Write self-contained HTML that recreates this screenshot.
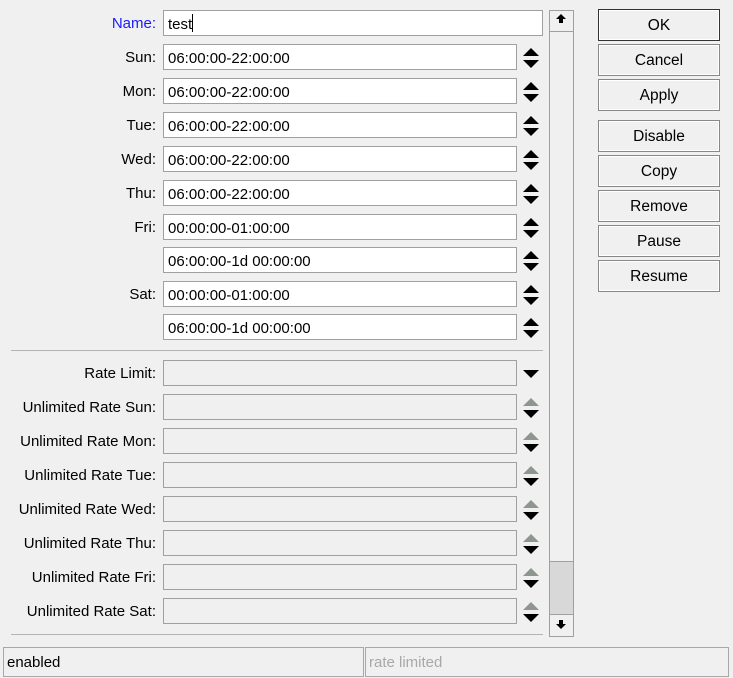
<!DOCTYPE html>
<html><head><style>
body{margin:0;width:733px;height:676px;background:#f0f0f0;font-family:"Liberation Sans",sans-serif;font-size:15px;color:#000;position:relative;overflow:hidden}
.a{position:absolute}
.lbl{position:absolute;right:577px;text-align:right;white-space:nowrap;line-height:28px}
.f{position:absolute;left:163px;width:348px;height:24px;border:1px solid #a0a0a0;background:#fff;line-height:27px;padding-left:4px;box-sizing:content-box}
.f.d{background:#f0f0f0}
.btn{position:absolute;left:598px;width:122px;border:1px solid #888;box-shadow:inset 1px 1px 0 #fff,inset -1px -1px 0 #fff;text-align:center;line-height:32px;font-size:15.5px;box-sizing:border-box;height:32px}
.up{position:absolute;left:523px;width:0;height:0;border-left:8px solid transparent;border-right:8px solid transparent;border-bottom:8px solid #000}
.dn{position:absolute;left:523px;width:0;height:0;border-left:8px solid transparent;border-right:8px solid transparent;border-top:8px solid #000}
.g{border-bottom-color:#8f968f}
</style></head><body>
<div class="lbl" style="top:10px;color:#1a1aff">Name:</div>
<div class="f" style="top:10px;width:374px">test<span style="display:inline-block;width:1px;height:18px;background:#000;vertical-align:-3px"></span></div>

<div class="lbl" style="top:44px">Sun:</div><div class="f" style="top:44px">06:00:00-22:00:00</div><div class="up" style="top:48px"></div><div class="dn" style="top:60px"></div>
<div class="lbl" style="top:78px">Mon:</div><div class="f" style="top:78px">06:00:00-22:00:00</div><div class="up" style="top:82px"></div><div class="dn" style="top:94px"></div>
<div class="lbl" style="top:112px">Tue:</div><div class="f" style="top:112px">06:00:00-22:00:00</div><div class="up" style="top:116px"></div><div class="dn" style="top:128px"></div>
<div class="lbl" style="top:146px">Wed:</div><div class="f" style="top:146px">06:00:00-22:00:00</div><div class="up" style="top:150px"></div><div class="dn" style="top:162px"></div>
<div class="lbl" style="top:180px">Thu:</div><div class="f" style="top:180px">06:00:00-22:00:00</div><div class="up" style="top:184px"></div><div class="dn" style="top:196px"></div>
<div class="lbl" style="top:214px">Fri:</div><div class="f" style="top:214px">00:00:00-01:00:00</div><div class="up" style="top:218px"></div><div class="dn" style="top:230px"></div>
<div class="f" style="top:247px">06:00:00-1d 00:00:00</div><div class="up" style="top:251px"></div><div class="dn" style="top:263px"></div>
<div class="lbl" style="top:281px">Sat:</div><div class="f" style="top:281px">00:00:00-01:00:00</div><div class="up" style="top:285px"></div><div class="dn" style="top:297px"></div>
<div class="f" style="top:314px">06:00:00-1d 00:00:00</div><div class="up" style="top:318px"></div><div class="dn" style="top:330px"></div>

<div class="a" style="left:11px;top:350px;width:532px;height:1px;background:#b4b4b4"></div>

<div class="lbl" style="top:360px">Rate Limit:</div><div class="f d" style="top:360px"></div><div class="dn" style="top:370px"></div>
<div class="lbl" style="top:394px">Unlimited Rate Sun:</div><div class="f d" style="top:394px"></div><div class="up g" style="top:398px"></div><div class="dn" style="top:410px"></div>
<div class="lbl" style="top:428px">Unlimited Rate Mon:</div><div class="f d" style="top:428px"></div><div class="up g" style="top:432px"></div><div class="dn" style="top:444px"></div>
<div class="lbl" style="top:462px">Unlimited Rate Tue:</div><div class="f d" style="top:462px"></div><div class="up g" style="top:466px"></div><div class="dn" style="top:478px"></div>
<div class="lbl" style="top:496px">Unlimited Rate Wed:</div><div class="f d" style="top:496px"></div><div class="up g" style="top:500px"></div><div class="dn" style="top:512px"></div>
<div class="lbl" style="top:530px">Unlimited Rate Thu:</div><div class="f d" style="top:530px"></div><div class="up g" style="top:534px"></div><div class="dn" style="top:546px"></div>
<div class="lbl" style="top:564px">Unlimited Rate Fri:</div><div class="f d" style="top:564px"></div><div class="up g" style="top:568px"></div><div class="dn" style="top:580px"></div>
<div class="lbl" style="top:598px">Unlimited Rate Sat:</div><div class="f d" style="top:598px"></div><div class="up g" style="top:602px"></div><div class="dn" style="top:614px"></div>

<div class="a" style="left:11px;top:634px;width:532px;height:1px;background:#b4b4b4"></div>

<div class="a" style="left:549px;top:10px;width:23px;height:625px;border:1px solid #a0a0a0;background:#d8d8d8"></div>
<div class="a" style="left:550px;top:11px;width:23px;height:20px;background:#f0f0f0;border-bottom:1px solid #a0a0a0"></div>
<div class="a" style="left:556px;top:14px;width:0;height:0;border-left:5px solid transparent;border-right:5px solid transparent;border-bottom:5px solid #000"></div>
<div class="a" style="left:559px;top:19px;width:4px;height:4px;background:#000"></div>
<div class="a" style="left:550px;top:32px;width:23px;height:529px;background:#f0f0f0;border-bottom:1px solid #a0a0a0"></div>
<div class="a" style="left:550px;top:614px;width:23px;height:21px;background:#f0f0f0;border-top:1px solid #a0a0a0"></div>
<div class="a" style="left:559px;top:620px;width:4px;height:4px;background:#000"></div>
<div class="a" style="left:556px;top:624px;width:0;height:0;border-left:5px solid transparent;border-right:5px solid transparent;border-top:5px solid #000"></div>

<div class="btn" style="top:9px;border-color:#333">OK</div>
<div class="btn" style="top:44px">Cancel</div>
<div class="btn" style="top:79px">Apply</div>
<div class="btn" style="top:120px">Disable</div>
<div class="btn" style="top:155px">Copy</div>
<div class="btn" style="top:190px">Remove</div>
<div class="btn" style="top:225px">Pause</div>
<div class="btn" style="top:260px">Resume</div>

<div class="a" style="left:3px;top:647px;height:30px;border:1px solid #a8a8a8;line-height:30px;padding-left:3px;box-sizing:border-box;width:361px">enabled</div>
<div class="a" style="left:365px;top:647px;width:364px;height:30px;border:1px solid #a8a8a8;line-height:30px;padding-left:3px;box-sizing:border-box;color:#a8a8a8">rate limited</div>
</body></html>
